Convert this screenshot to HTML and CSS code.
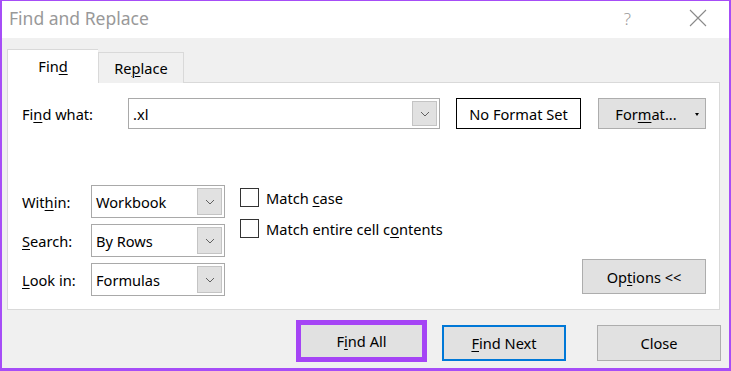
FILE: index.html
```html
<!DOCTYPE html>
<html>
<head>
<meta charset="utf-8">
<link rel="stylesheet" href="styles.css">
</head>
<body>
<div class="window">
  <div class="titlebar">
    <span class="title">Find and Replace</span>
    <span class="help">?</span>
    <svg class="close-x" width="18" height="18" viewBox="0 0 18 18"><path d="M1 1 L17 17 M17 1 L1 17" stroke="#8a8a8a" stroke-width="1.1" fill="none"/></svg>
  </div>
  <div class="body">
    <div class="tabs">
      <div class="tab active">Fin<u>d</u></div>
      <div class="tab">Re<u>p</u>lace</div>
    </div>
    <div class="panel">
      <div class="row-find">
        <span class="label-find">Fi<u>n</u>d what:</span>
        <div class="combo combo-find">
          <span class="combo-text">.xl</span>
          <span class="combo-btn"><svg width="10" height="6" viewBox="0 0 10 6"><path d="M1 1 L5 5 L9 1" stroke="#606060" stroke-width="1" fill="none"/></svg></span>
        </div>
        <div class="noformat">No Format Set</div>
        <div class="btn btn-format"><span>For<u>m</u>at...</span><span class="tri"></span></div>
      </div>
      <div class="bottom">
        <div class="opts">
          <div class="opt-row">
            <span class="opt-label">Wit<u>h</u>in:</span>
            <div class="combo combo-small"><span class="combo-text">Workbook</span><span class="combo-btn"><svg width="10" height="6" viewBox="0 0 10 6"><path d="M1 1 L5 5 L9 1" stroke="#606060" stroke-width="1" fill="none"/></svg></span></div>
          </div>
          <div class="opt-row">
            <span class="opt-label"><u>S</u>earch:</span>
            <div class="combo combo-small"><span class="combo-text">By Rows</span><span class="combo-btn"><svg width="10" height="6" viewBox="0 0 10 6"><path d="M1 1 L5 5 L9 1" stroke="#606060" stroke-width="1" fill="none"/></svg></span></div>
          </div>
          <div class="opt-row">
            <span class="opt-label"><u>L</u>ook in:</span>
            <div class="combo combo-small"><span class="combo-text">Formulas</span><span class="combo-btn"><svg width="10" height="6" viewBox="0 0 10 6"><path d="M1 1 L5 5 L9 1" stroke="#606060" stroke-width="1" fill="none"/></svg></span></div>
          </div>
        </div>
        <div class="checks">
          <div class="check-row"><span class="box"></span><span>Match <u>c</u>ase</span></div>
          <div class="check-row"><span class="box"></span><span>Match entire cell c<u>o</u>ntents</span></div>
        </div>
        <div class="btn btn-options"><span>Op<u>t</u>ions &lt;&lt;</span></div>
      </div>
    </div>
    <div class="footer">
      <div class="btn btn-foot btn-findall"><span>F<u>i</u>nd All</span></div>
      <div class="btn btn-foot btn-findnext"><span><u>F</u>ind Next</span></div>
      <div class="btn btn-foot btn-close">Close</div>
    </div>
  </div>
</div>
</body>
</html>
```

FILE: styles.css
```css
* { box-sizing: border-box; }
html, body { margin: 0; padding: 0; }
body {
  font-family: "Noto Sans", "Open Sans", sans-serif;
  font-size: 14.6px;
  color: #000;
  background: #fff;
}
u { text-decoration: underline; text-underline-offset: 2px; text-decoration-thickness: 1px; }
.window {
  width: 731px;
  height: 371px;
  border: 2px solid #a64df7;
  border-top-width: 1px;
  border-bottom-width: 3px;
  display: flex;
  flex-direction: column;
  background: #f0f0f0;
}
.titlebar {
  height: 37px;
  background: #fff;
  display: flex;
  align-items: center;
  padding-left: 7px;
  padding-bottom: 3px;
  flex-shrink: 0;
}
.title {
  font-size: 17.5px;
  color: #999;
  flex: 1;
}
.help {
  font-size: 17px;
  color: #999;
  margin-right: 58px;
  font-weight: 300;
}
.close-x { margin-right: 22px; }
.body {
  flex: 1;
  display: flex;
  flex-direction: column;
  padding: 12px 9px 0 5px;
}
.tabs {
  display: flex;
  align-items: flex-end;
  height: 33px;
  position: relative;
  z-index: 1;
  margin-bottom: -1px;
}
.tab {
  height: 31px;
  padding-top: 5px;
  border: 1px solid #d9d9d9;
  border-bottom: none;
  background: #f0f0f0;
  width: 86px;
  text-align: center;
}
.tab.active {
  height: 34px;
  width: 91px;
  background: #fff;
  border-right: none;
  padding-top: 6px;
}
.panel {
  height: 228px;
  background: #fff;
  border: 1px solid #d9d9d9;
  padding: 15px 13px 13px 14px;
  display: flex;
  flex-direction: column;
  justify-content: space-between;
}
.row-find {
  display: flex;
  align-items: center;
  height: 31px;
}
.label-find { width: 106px; }
.combo {
  display: flex;
  align-items: center;
  border: 1px solid #a9a9a9;
  background: #fff;
  padding: 2px;
}
.combo-text { flex: 1; padding-left: 2px; }
.combo-btn {
  width: 25px;
  align-self: stretch;
  background: #e1e1e1;
  border: 1px solid #c4c4c4;
  display: flex;
  align-items: center;
  justify-content: center;
}
.combo-find { width: 312px; height: 31px; }
.noformat {
  margin-left: 16px;
  width: 125px;
  height: 31px;
  border: 1px solid #000;
  display: flex;
  align-items: center;
  justify-content: center;
}
.btn {
  background: #e1e1e1;
  border: 1px solid #adadad;
  display: flex;
  align-items: center;
  justify-content: center;
}
.btn-format {
  margin-left: 17px;
  width: 108px;
  height: 31px;
  position: relative;
  padding-right: 12px;
}
.tri {
  position: absolute;
  right: 6px;
  top: 14px;
  border-left: 2.5px solid transparent;
  border-right: 2.5px solid transparent;
  border-top: 3px solid #000;
}
.bottom {
  display: flex;
  align-items: flex-end;
}
.opts {
  display: flex;
  flex-direction: column;
  gap: 6px;
}
.opt-row {
  display: flex;
  align-items: center;
  height: 33px;
}
.opt-label { width: 69px; }
.combo-small { width: 134px; height: 33px; }
.checks {
  align-self: flex-start;
  margin-left: 15px;
  padding-top: 3px;
  display: flex;
  flex-direction: column;
  gap: 12px;
}
.check-row {
  display: flex;
  align-items: center;
  height: 19px;
}
.box {
  width: 19px;
  height: 19px;
  border: 1px solid #333;
  margin-right: 7px;
  background: #fff;
}
.btn-options {
  margin-left: auto;
  width: 124px;
  height: 35px;
  margin-bottom: 2px;
}
.footer {
  display: flex;
  padding-top: 15px;
  margin-right: -1px;
  justify-content: flex-end;
}
.btn-foot { width: 124px; height: 36px; }
.btn-findall {
  width: 131px;
  height: 42px;
  margin-top: -5px;
  border: 5px solid #a544f5;
}
.btn-findnext {
  margin-left: 15px;
  border: 2px solid #0078d7;
}
.btn-close { margin-left: 31px; }
```
